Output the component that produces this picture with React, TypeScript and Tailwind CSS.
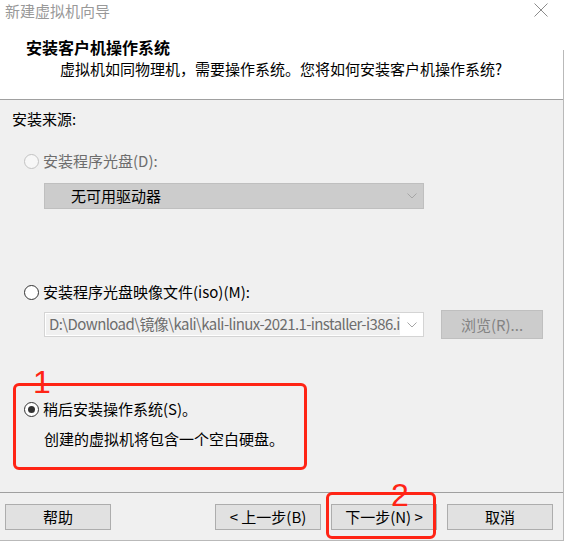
import React from "react";

const Chevron = () => (
  <svg width="10" height="6" viewBox="0 0 10 6" className="shrink-0">
    <path d="M0.5 0.5 L5 5 L9.5 0.5" fill="none" stroke="#a6a6a6" strokeWidth="1" />
  </svg>
);

const Radio = ({ checked = false, disabled = false }: { checked?: boolean; disabled?: boolean }) => (
  <span
    className={
      disabled
        ? "w-[15px] h-[15px] rounded-full border border-[#c2c2c2] bg-[#f7f7f7] shrink-0"
        : "w-[15px] h-[15px] rounded-full border border-[#333333] bg-white shrink-0 flex items-center justify-center"
    }
  >
    {checked && <span className="w-[7px] h-[7px] rounded-full bg-[#333333]" />}
  </span>
);

const Button = ({ label, className = "" }: { label: string; className?: string }) => (
  <button
    className={
      "w-[106px] h-[26px] bg-[#e1e1e1] border border-[#adadad] text-[15px] leading-[20px] text-black flex items-center justify-center " +
      className
    }
  >
    {label}
  </button>
);

const App: React.FC = () => {
  return (
    <div className="w-[567px] h-[542px] bg-white relative overflow-hidden font-['Noto_Sans_CJK_SC',sans-serif]">
      <div className="w-[563px] flex flex-col border-b border-[#b9b9b9]">
        {/* header */}
        <div className="h-[100px] bg-white border-b border-[#a0a0a0] flex flex-col">
          <div className="flex justify-between items-start pt-[2px] pl-[5px] pr-[15px]">
            <span className="text-[15px] leading-[18px] text-[#999999]">新建虚拟机向导</span>
            <svg width="14" height="14" viewBox="0 0 14 14" className="mt-[1px]">
              <path d="M0.5 0.5 L13.5 13.5 M13.5 0.5 L0.5 13.5" stroke="#8c8c8c" strokeWidth="1" />
            </svg>
          </div>
          <div className="mt-[17px] pl-[26px] text-[16px] leading-[20px] font-bold text-black">
            安装客户机操作系统
          </div>
          <div className="mt-[2px] pl-[60px] text-[15px] leading-[20px] text-black">
            虚拟机如同物理机，需要操作系统。您将如何安装客户机操作系统?
          </div>
        </div>

        {/* body */}
        <div className="h-[392px] bg-[#f0f0f0] flex flex-col text-[15px] leading-[20px] text-black">
          <div className="pt-[9px] pl-[12px]">安装来源:</div>

          <div className="mt-[22px] pl-[24px] flex items-center gap-[4px]">
            <Radio disabled />
            <span className="text-[#6d6d6d]">安装程序光盘(D):</span>
          </div>

          <div className="mt-[12px] ml-[44px] w-[380px] h-[26px] bg-[#cccccc] border border-[#bfbfbf] flex items-center justify-between pl-[26px] pr-[6px]">
            <span>无可用驱动器</span>
            <Chevron />
          </div>

          <div className="mt-[73px] pl-[24px] flex items-center gap-[4px]">
            <Radio />
            <span>安装程序光盘映像文件(iso)(M):</span>
          </div>

          <div className="mt-[8px] pl-[44px] flex items-center gap-[17px]">
            <div className="w-[380px] h-[25px] bg-white border border-[#d4d4d4] flex items-center pl-[1px] pr-[6px]">
              <div className="w-[354px] h-[21px] bg-[#f0f0f0] overflow-hidden whitespace-nowrap text-[#6d6d6d] pl-[3px] tracking-[-0.6px]">
                D:\Download\镜像\kali\kali-linux-2021.1-installer-i386.iso
              </div>
              <span className="ml-auto">
                <Chevron />
              </span>
            </div>
            <div className="w-[102px] h-[29px] bg-[#cccccc] border border-[#bfbfbf] flex items-center justify-center text-[#838383]">
              浏览(R)...
            </div>
          </div>

          <div className="mt-[60px] pl-[24px] flex items-center gap-[4px]">
            <Radio checked />
            <span>稍后安装操作系统(S)。</span>
          </div>
          <div className="mt-[10px] pl-[44px]">创建的虚拟机将包含一个空白硬盘。</div>
        </div>

        {/* footer */}
        <div className="h-[48px] bg-[#f0f0f0] border-t border-[#a0a0a0] flex items-start pt-[11px] pl-[5px]">
          <Button label="帮助" />
          <Button label="< 上一步(B)" className="ml-[104px]" />
          <Button label="下一步(N) >" className="ml-[10px]" />
          <Button label="取消" className="ml-[10px]" />
        </div>
      </div>

      {/* window edge */}
      <div className="absolute left-[563px] top-[50px] w-px h-[491px] bg-[#b9b9b9]" />

      {/* annotations */}
      <div className="absolute left-[13px] top-[383px] w-[294px] h-[87px] border-[3px] border-[#ff2415] rounded-[6px]" />
      <div className="absolute left-[33px] top-[366px] text-[32px] leading-[32px] text-[#ff2415] font-['Liberation_Sans',sans-serif]">
        1
      </div>
      <div className="absolute left-[326px] top-[492px] w-[110px] h-[47px] border-[3px] border-[#ff2415] rounded-[6px]" />
      <div className="absolute left-[391px] top-[479px] text-[32px] leading-[32px] text-[#ff2415] font-['Liberation_Sans',sans-serif]">
        2
      </div>
    </div>
  );
};

export default App;
